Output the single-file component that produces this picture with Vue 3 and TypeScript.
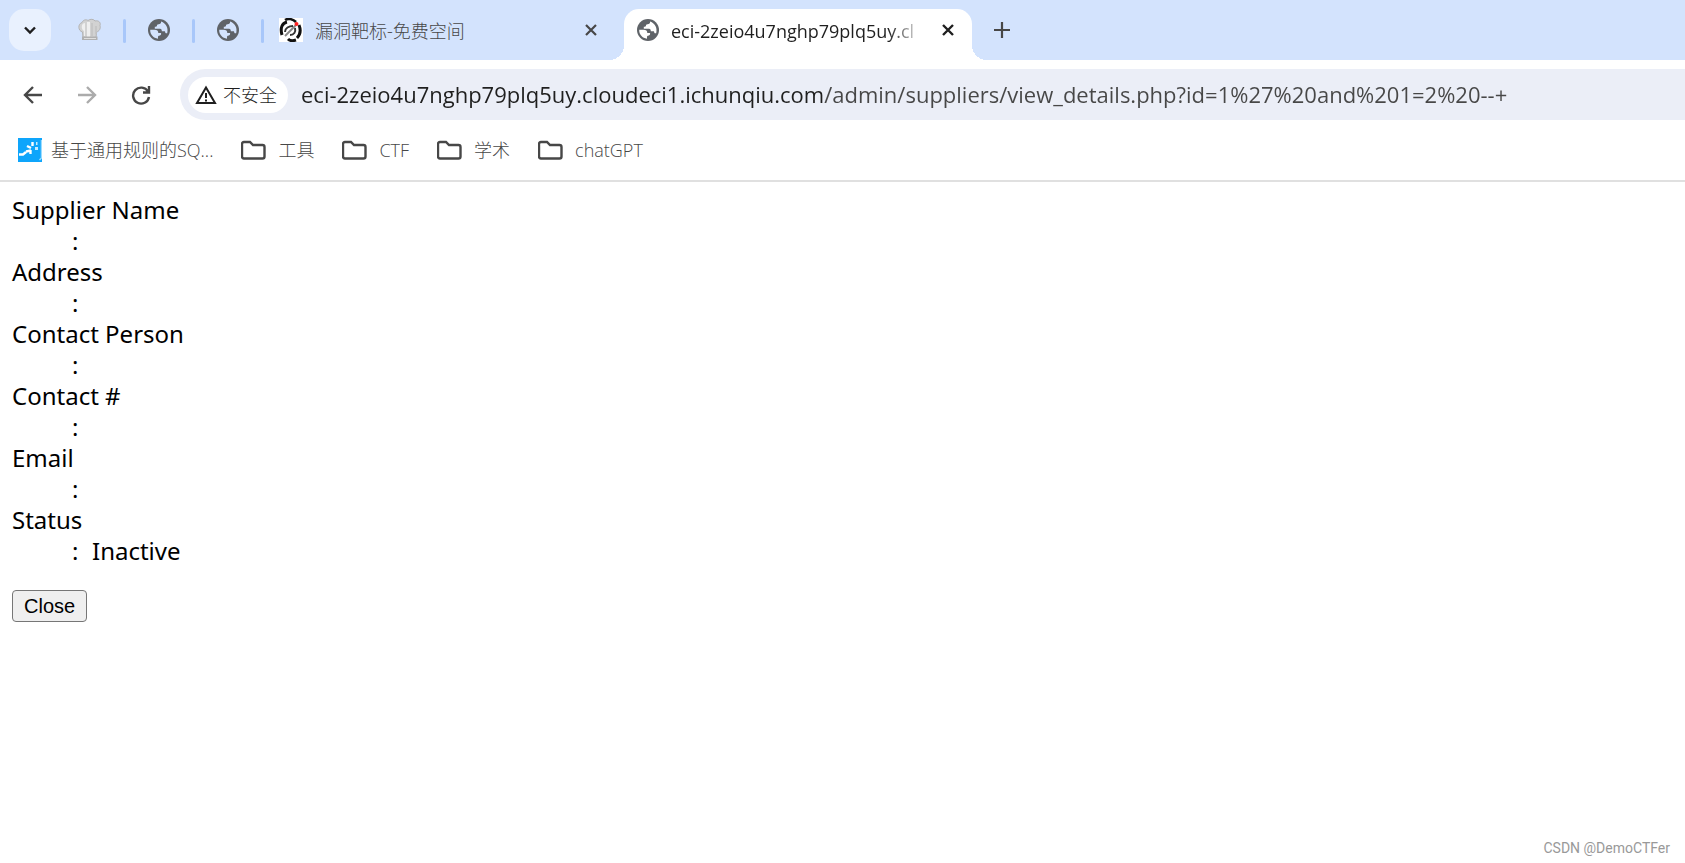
<script setup lang="ts">
import { ref } from 'vue'

const address = ref('eci-2zeio4u7nghp79plq5uy.cloudeci1.ichunqiu.com/admin/suppliers/view_details.php?id=1%27%20and%201=2%20--+')
const folders: string[] = ['工具', 'CTF', '学术', 'chatGPT']
const details: { term: string; value: string }[] = [
  { term: 'Supplier Name', value: '' },
  { term: 'Address', value: '' },
  { term: 'Contact Person', value: '' },
  { term: 'Contact #', value: '' },
  { term: 'Email', value: '' },
  { term: 'Status', value: 'Inactive' },
]
const land = 'M13 2.400c.4 1.800-.8 2.600-2.500 2.800-1.300.1-1.500.6-1.500 1.300 0 1-.7 1.300-2.200 1.300v2h5.200c1.500 0 1.800 1 1.800 2.400h2.600c.6 0 .8.5.8 1.200.4.900 1.200 1 2 .8 1.300-5-.8-10-6.200-11.800zM2.200 10.800h4.300c2.600 0 3.800 1 3.800 3.200h2.800c.2 1.700-.6 2.700-2.300 2.800-.8 0-.8.8-.8 2.900C5.500 19.200 2 15.700 2.200 10.800z'
</script>

<template>
  <div class="browser">
    <header class="tabs">
      <button class="tab-search" aria-label="Search tabs">
        <svg width="16" height="16" viewBox="0 0 16 16"><path d="M3 5.500l5 5 5-5" fill="none" stroke="#1f1f1f" stroke-width="2.400" /></svg>
      </button>
      <button class="pinned" aria-label="CyberChef">
        <svg width="24" height="24" viewBox="0 0 24 24">
          <path d="M4.500 14C0 13-.5 6 4 4.500 5 2 8 1 10 2.500c2-1.800 6-1.500 7 .5 4-1 6 2 5 4.500 1 3-1 6-3.500 6.500l-.5 6H5z" fill="#d2d2d2" stroke="#b4b4b4" />
          <path d="M4 7q1-2 3-2v13H6v-5q-3-2-2-6zM9 4h3v15H9z" fill="#efefef" />
          <path d="M14 5v13M18 8v8" stroke="#c2c2c2" stroke-width="1.500" />
          <path d="M4 18.500h15.500V22H4z" fill="#b0b0b0" />
          <path d="M6 20.500h12" stroke="#dedede" />
        </svg>
      </button>
      <i class="sep"></i>
      <button class="pinned" aria-label="Pinned page">
        <svg width="22" height="22" viewBox="0 0 22 22"><circle cx="11" cy="11" r="11" fill="#5f6368" /><path class="land" :d="land" /></svg>
      </button>
      <i class="sep"></i>
      <button class="pinned" aria-label="Pinned page">
        <svg width="22" height="22" viewBox="0 0 22 22"><circle cx="11" cy="11" r="11" fill="#5f6368" /><path class="land" :d="land" /></svg>
      </button>
      <i class="sep"></i>
      <div class="tab">
        <svg width="24" height="24" viewBox="0 0 24 24">
          <path d="M0 0h24v24H0z" fill="#fff" />
          <path d="M3 17C1 10 3 5 8 4" fill="none" stroke="#111" stroke-width="3" />
          <path d="M6 2c3-2 8-1 11 2" fill="none" stroke="#111" stroke-width="2.500" />
          <path d="M20 7c2 5 2 9-2 13M17 22c-3 1-6 1-8-1" fill="none" stroke="#111" stroke-width="3" />
          <path d="M6 18L17 7" stroke="#888" stroke-width="2" />
          <path d="M6 14c0-4 4-6 8-6M11 17c4 0 6-3 5-7" fill="none" stroke="#333" stroke-width="2" />
          <circle cx="17.500" cy="6" r="2" fill="#f22" />
        </svg>
        <span class="title">漏洞靶标-免费空间</span>
        <button class="close" aria-label="Close tab"><svg width="12" height="12" viewBox="0 0 12 12"><path d="M1 1l10 10M11 1L1 11" stroke="#474747" stroke-width="2.200" /></svg></button>
      </div>
      <div class="tab active">
        <svg width="22" height="22" viewBox="0 0 22 22"><circle cx="11" cy="11" r="11" fill="#5f6368" /><path class="land" :d="land" /></svg>
        <span class="title faded">eci-2zeio4u7nghp79plq5uy.cl</span>
        <button class="close" aria-label="Close tab"><svg width="12" height="12" viewBox="0 0 12 12"><path d="M1 1l10 10M11 1L1 11" stroke="#1f1f1f" stroke-width="2.400" /></svg></button>
      </div>
      <button class="new-tab" aria-label="New tab"><svg width="16" height="16" viewBox="0 0 16 16"><path d="M8 0v16M0 8h16" stroke="#474747" stroke-width="2.200" /></svg></button>
    </header>

    <nav class="toolbar">
      <button class="nav" aria-label="Back"><svg width="20" height="20" viewBox="0 0 20 20"><path d="M19 10H2.500M10 2L2 10l8 8" fill="none" stroke="#474747" stroke-width="2.400" /></svg></button>
      <button class="nav" aria-label="Forward"><svg width="20" height="20" viewBox="0 0 20 20"><path d="M1 10h16.500M10 2l8 8-8 8" fill="none" stroke="#ababab" stroke-width="2.400" /></svg></button>
      <button class="nav" aria-label="Reload"><svg width="20" height="20" viewBox="0 0 20 20"><path d="M17 6.500A8 8 0 1 0 18 12M18 1v6.500H12" fill="none" stroke="#474747" stroke-width="2.400" /></svg></button>
      <div class="omnibox">
        <button class="chip">
          <svg width="22" height="20" viewBox="0 0 22 20"><path d="M11 2.500L20 18H2z" fill="none" stroke="#1f1f1f" stroke-width="2" /><path d="M11 8v5M11 14.500v2" stroke="#1f1f1f" stroke-width="2" /></svg>
          <span>不安全</span>
        </button>
        <input v-model="address" class="address" type="text" aria-label="Address" spellcheck="false" />
      </div>
    </nav>

    <nav class="bookmarks">
      <a class="mark" href="#">
        <svg width="24" height="24" viewBox="0 0 24 24">
          <path d="M0 0h24v24H0z" fill="#0ea5fb" />
          <path d="M1 16.500h4l3-2.500M8 13.500l5-1M9 8l4 2M14.500 4v4M12.500 12v4" fill="none" stroke="#fff" stroke-width="2.400" />
          <path d="M17 10.500h3M18 5.500h1.500" stroke="#c5ebff" stroke-width="3" />
          <path d="M23.500 2v18l-2 2" fill="none" stroke="#9bdcff" stroke-width="1.500" />
        </svg>
        <span>基于通用规则的SQ...</span>
      </a>
      <a v-for="name in folders" :key="name" class="mark folder" href="#">
        <svg width="25" height="20" viewBox="0 0 25 20"><path d="M3 2h6l3 3h9.500q2 0 2 2v9.500q0 2-2 2H3q-2 0-2-2V4q0-2 2-2z" fill="none" stroke="#474747" stroke-width="2.400" /></svg>
        <span>{{ name }}</span>
      </a>
    </nav>

    <main class="page">
      <dl>
        <template v-for="row in details" :key="row.term">
          <dt>{{ row.term }}</dt>
          <dd><span class="colon">:</span>{{ row.value }}</dd>
        </template>
      </dl>
      <button class="dismiss">Close</button>
    </main>
    <footer class="credit">CSDN @DemoCTFer</footer>
  </div>
</template>

<style>
body { margin: 0; background: #fff; }
</style>

<style scoped>
.browser { min-height: 100vh; display: flex; flex-direction: column; font-family: "Open Sans", "Noto Sans CJK SC", sans-serif; color: #1f1f1f; }
svg { display: block; flex: none; }
button { font: inherit; color: inherit; border: 0; padding: 0; background: none; }
.tabs { display: flex; align-items: flex-start; height: 60px; box-sizing: border-box; padding: 9px 9px 0; background: #d3e3fd; }
.tab-search { width: 42px; height: 42px; border-radius: 15px; background: #e9f1fe; display: grid; place-items: center; margin-right: 6px; }
.pinned { width: 66px; height: 42px; display: grid; place-items: center; }
.sep { width: 3px; height: 24px; margin-top: 10px; border-radius: 2px; background: #a8c7fa; }
.land { fill: #d3e3fd; }
.active .land { fill: #fff; }
.tab { width: 360px; height: 51px; box-sizing: border-box; padding: 0 21px 9px 15px; display: flex; align-items: center; font-size: 18px; color: #474747; }
.title { flex: 1; min-width: 0; margin-left: 12px; white-space: nowrap; overflow: hidden; line-height: 30px; padding-top: 2px; font-weight: 300; }
.close { width: 24px; height: 24px; display: grid; place-items: center; }
.active { position: relative; width: 348px; padding-left: 13px; padding-right: 12px; border-radius: 15px 15px 0 0; background: #fff; color: #1f1f1f; }
.active::before, .active::after { content: ""; position: absolute; bottom: 0; width: 15px; height: 15px; background: radial-gradient(circle at 0 0, transparent 15px, #fff 15px); }
.active::before { right: 100%; }
.active::after { left: 100%; background: radial-gradient(circle at 100% 0, transparent 15px, #fff 15px); }
.faded { margin-right: 12px; font-weight: 400; mask-image: linear-gradient(90deg, #000 calc(100% - 36px), transparent); }
.new-tab { width: 42px; height: 42px; margin-left: 9px; display: grid; place-items: center; }
.toolbar { display: flex; align-items: center; height: 69px; padding-left: 6px; box-sizing: border-box; background: linear-gradient(#fff, #fff); box-shadow: none; }
.nav { width: 54px; height: 42px; display: grid; place-items: center; }
.omnibox { flex: 1; height: 51px; margin-left: 12px; box-sizing: border-box; padding-left: 8px; display: flex; align-items: center; background: #ebeef7; border-radius: 26px 0 0 26px; }
.chip { height: 36px; padding: 0 11px 0 7px; border-radius: 18px; background: #fff; display: flex; align-items: center; gap: 6px; font-size: 18px; font-weight: 300; line-height: 26px; white-space: nowrap; }
.address { flex: 1; min-width: 0; height: 42px; margin-left: 13px; padding: 0 0 2px; box-sizing: border-box; border: 0; outline: 0; font: inherit; font-size: 22px; color: #1f1f1f; -webkit-text-fill-color: transparent; background: linear-gradient(90deg, #1f1f1f 522px, #474747 522px); background-clip: text; }
.bookmarks { display: flex; align-items: center; gap: 28px; height: 53px; padding: 0 18px 9px; box-sizing: border-box; border-bottom: 2px solid #e0e0e0; }
.mark { display: flex; align-items: center; gap: 9px; color: #474747; text-decoration: none; font-size: 18px; font-weight: 300; line-height: 26px; white-space: nowrap; }
.folder { gap: 12px; }
.page { flex: 1; padding: 12px; color: #000; }
dl { margin: 0 0 24px; font-family: "Noto Sans", sans-serif; font-size: 24px; line-height: 31px; }
dd { margin-left: 60px; }
.colon { display: inline-block; width: 20px; }
.dismiss { height: 32px; padding: 0 11px; box-sizing: border-box; border: 1px solid #767676; border-radius: 4px; background: #efefef; font: 20px/28px "Liberation Sans", Arial, sans-serif; }
.credit { padding: 0 15px 5px; text-align: right; font: 14px/20px Roboto, sans-serif; color: #999; }
</style>
